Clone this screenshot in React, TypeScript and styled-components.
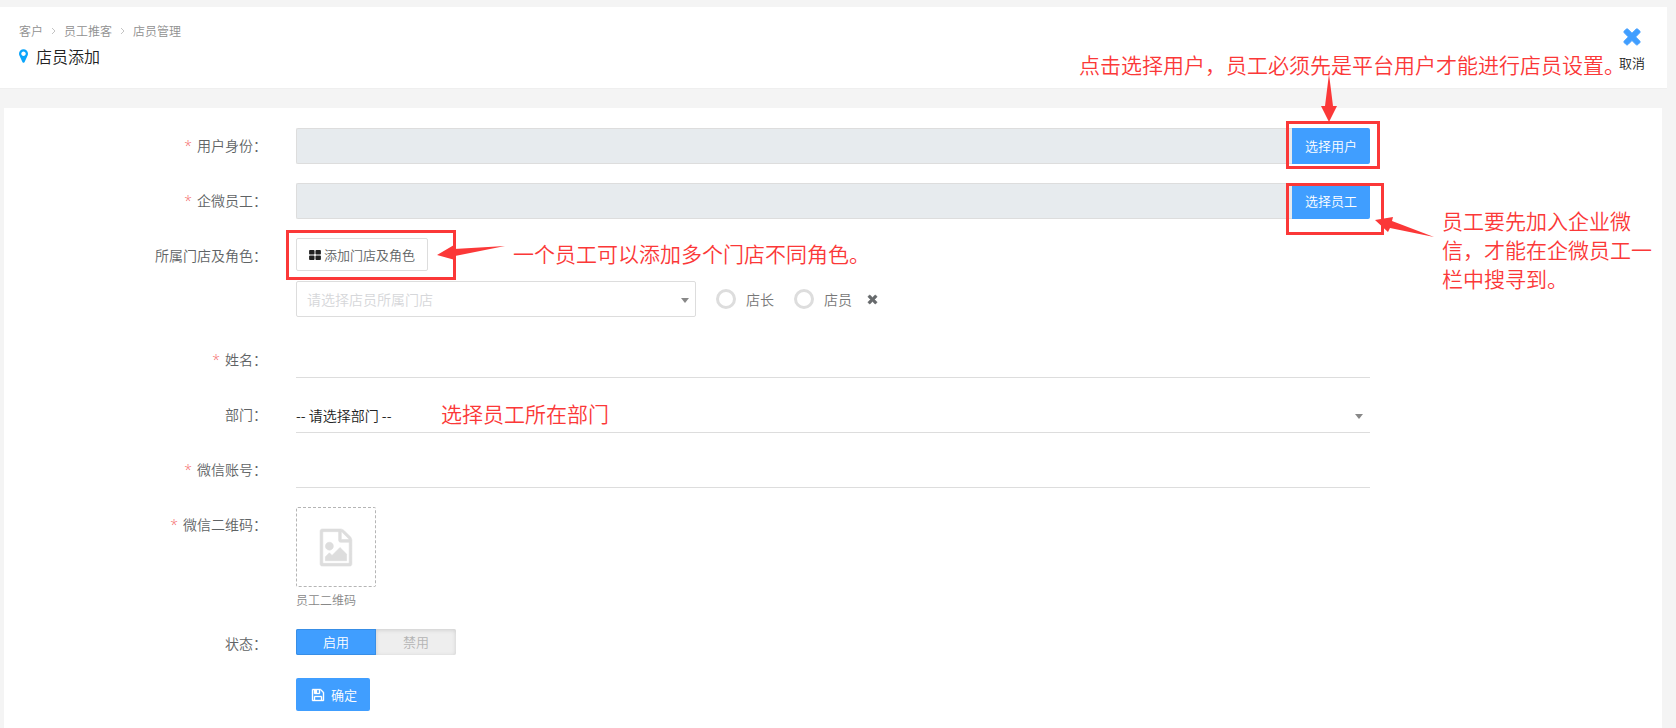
import React from 'react';
import styled, { createGlobalStyle } from 'styled-components';

const BLUE = '#409eff';
const RED = '#fb3838';

const GlobalStyle = createGlobalStyle`
  *, *::before, *::after { box-sizing: border-box; }
  body {
    margin: 0;
    background: #f4f4f4;
    color: #606365;
    font-family: 'Noto Sans CJK SC', sans-serif;
    font-weight: 350;
    font-size: 14px;
    line-height: 20px;
  }
  button, input, select { font: inherit; margin: 0; border-radius: 0; }
  button { cursor: pointer; }
`;

const Page = styled.div`
  display: flex;
  flex-direction: column;
  gap: 20px;
  min-height: 100vh;
  padding-top: 7px;
  overflow-x: hidden;
`;

const Header = styled.header`
  display: flex;
  justify-content: space-between;
  margin-right: 9px;
  padding: 15px 20px 14px 19px;
  background: #fff;
  box-shadow: 0 1px 0 #efefef;
`;

const Crumbs = styled.nav`
  display: flex;
  align-items: center;
  gap: 8px;
  font-size: 12px;
  line-height: 18px;
`;

const Crumb = styled.a`
  color: #909090;
  text-decoration: none;
`;

const Title = styled.h1`
  display: flex;
  align-items: center;
  gap: 8px;
  margin: 4px 0 0;
  color: #222;
  font-size: 16px;
  font-weight: inherit;
  line-height: 24px;
`;

const CancelButton = styled.button`
  display: flex;
  flex-direction: column;
  align-items: center;
  gap: 8px;
  padding: 5px 2px 1px;
  border: 0;
  background: none;
  color: #222;
  font-size: 13px;
  line-height: 20px;
`;

const Panel = styled.form`
  flex: 1;
  display: flex;
  flex-direction: column;
  gap: 19px;
  margin: 0 14px 0 4px;
  padding: 20px 1px 18px;
  background: #fff;
`;

const Row = styled.div`
  display: grid;
  grid-template-columns: minmax(0, 2fr) minmax(0, 8fr) minmax(0, 2fr);
`;

const Label = styled.label`
  padding: 7px 14px 0 0;
  text-align: right;
  line-height: 20px;
`;

const Required = styled.span`
  margin-right: 5px;
  color: #f56c6c;
  font-family: 'Open Sans', sans-serif;
`;

const Field = styled.div<{ $top?: number; $bottom?: number }>`
  grid-column: 2;
  position: relative;
  padding: ${p => p.$top ?? 0}px 15px ${p => p.$bottom ?? 0}px;
`;

const PickerGroup = styled.div`
  display: flex;
`;

const PickerInput = styled.input`
  flex: 1;
  min-width: 0;
  height: 36px;
  padding: 0 10px;
  border: 1px solid #ddd;
  border-right: 0;
  border-radius: 2px 0 0 2px;
  background: #e7ebee;
`;

const Anchor = styled.div`
  position: relative;
  display: flex;
`;

const PickerButton = styled.button`
  width: 78px;
  height: 36px;
  padding: 0;
  border: 0;
  border-radius: 0 2px 2px 0;
  background: ${BLUE};
  color: #fff;
  font-size: 13px;
`;

const AddButton = styled.button`
  display: flex;
  align-items: center;
  gap: 3px;
  height: 33px;
  padding: 0 12px;
  border: 1px solid #ddd;
  border-radius: 2px;
  background: #fff;
  color: #606365;
  font-size: 13px;
`;

const StoreLine = styled.div`
  display: flex;
  align-items: center;
  margin-top: 10px;
`;

const SelectBox = styled.div<{ $width?: string; $inset: number }>`
  position: relative;
  width: ${p => p.$width ?? '100%'};
  &::after {
    content: '';
    position: absolute;
    top: 17px;
    right: ${p => p.$inset}px;
    border: 4px solid transparent;
    border-top: 5px solid #888;
    border-bottom: 0;
    pointer-events: none;
  }
`;

const StoreSelect = styled.select`
  display: block;
  width: 100%;
  height: 36px;
  padding: 0 24px 0 10px;
  border: 1px solid #ddd;
  border-radius: 2px;
  appearance: none;
  background: #fff;
  color: #d6d7da;
`;

const DepartmentSelect = styled.select`
  display: block;
  width: 100%;
  height: 36px;
  padding: 0 24px 0 0;
  border: 0;
  border-bottom: 1px solid #ddd;
  appearance: none;
  background: #fff;
  color: #222;
`;

const LineInput = styled.input`
  display: block;
  width: 100%;
  height: 36px;
  padding: 0;
  border: 0;
  border-bottom: 1px solid #ddd;
  background: #fff;
  outline: none;
`;

const RadioLabel = styled.label`
  display: flex;
  align-items: center;
  gap: 10px;
  margin-left: 20px;
  color: #777;
`;

const Radio = styled.input`
  width: 20px;
  height: 20px;
  border: 3px solid #ddd;
  border-radius: 50%;
  appearance: none;
  background: #fff;
  &:checked { border-color: ${BLUE}; }
`;

const RemoveButton = styled.button`
  display: flex;
  margin-left: 15px;
  padding: 0;
  border: 0;
  background: none;
`;

const Upload = styled.button`
  display: flex;
  align-items: center;
  justify-content: center;
  width: 80px;
  height: 80px;
  padding: 0;
  border: 1px dashed #b5b5b5;
  border-radius: 2px;
  background: #fff;
`;

const Caption = styled.div`
  margin-top: 6px;
  color: #888;
  font-size: 12px;
  line-height: 14px;
`;

const Switch = styled.div`
  display: flex;
`;

const SwitchButton = styled.button<{ $on?: boolean }>`
  width: 80px;
  height: 26px;
  padding: 0;
  border: 0;
  border-radius: ${p => (p.$on ? '2px 0 0 2px' : '0 2px 2px 0')};
  background: ${p => (p.$on ? BLUE : '#eee')};
  box-shadow: ${p => (p.$on ? 'inset 0 0 0 1px #388ee6' : 'inset 0 1px 4px #ccc')};
  color: ${p => (p.$on ? '#fff' : '#b4b4b4')};
  font-size: 13px;
`;

const SubmitButton = styled.button`
  display: flex;
  align-items: center;
  gap: 7px;
  height: 33px;
  padding: 0 13px 0 16px;
  border: 0;
  border-radius: 2px;
  background: ${BLUE};
  color: #fff;
  font-size: 13px;
`;

/* Red callouts floating over the form */
const Frame = styled.div<{ $x: number; $y: number; $w: number; $h: number }>`
  position: absolute;
  left: ${p => p.$x}px;
  top: ${p => p.$y}px;
  width: ${p => p.$w}px;
  height: ${p => p.$h}px;
  border: 3px solid ${RED};
  pointer-events: none;
`;

const Arrow = styled.svg<{ $x: number; $y: number }>`
  position: absolute;
  left: ${p => p.$x}px;
  top: ${p => p.$y}px;
  fill: ${RED};
  pointer-events: none;
`;

const Note = styled.div<{ $x: number; $y: number; $w?: number }>`
  position: absolute;
  left: ${p => p.$x}px;
  top: ${p => p.$y}px;
  width: ${p => (p.$w ? `${p.$w}px` : 'max-content')};
  color: ${RED};
  font-size: 21px;
  line-height: 29px;
  pointer-events: none;
`;

/* Half-width closing punctuation, so a note ends right after its last mark */
const Stop = styled.span`
  font-feature-settings: 'halt';
`;

const PATHS = {
  times:
    'M1490 1322q0 40-28 68l-136 136q-28 28-68 28t-68-28l-294-294-294 294q-28 28-68 28t-68-28l-136-136q-28-28-28-68t28-68l294-294-294-294q-28-28-28-68t28-68l136-136q28-28 68-28t68 28l294 294 294-294q28-28 68-28t68 28l136 136q28 28 28 68t-28 68l-294 294 294 294q28 28 28 68z',
  grid:
    'M832 1024v384q0 52-38 90t-90 38h-512q-52 0-90-38t-38-90v-384q0-52 38-90t90-38h512q52 0 90 38t38 90zm0-768v384q0 52-38 90t-90 38h-512q-52 0-90-38t-38-90v-384q0-52 38-90t90-38h512q52 0 90 38t38 90zm896 768v384q0 52-38 90t-90 38h-512q-52 0-90-38t-38-90v-384q0-52 38-90t90-38h512q52 0 90 38t38 90zm0-768v384q0 52-38 90t-90 38h-512q-52 0-90-38t-38-90v-384q0-52 38-90t90-38h512q52 0 90 38t38 90z',
  save:
    'M512 1536h768v-384h-768v384zm896 0h128v-896q0-14-10-38.5t-20-34.5l-281-281q-10-10-34-20t-39-10v416q0 40-28 68t-68 28h-576q-40 0-68-28t-28-68v-416h-128v1280h128v-416q0-40 28-68t68-28h832q40 0 68 28t28 68v416zm-384-928v-320q0-13-9.5-22.5t-22.5-9.5h-192q-13 0-22.5 9.5t-9.5 22.5v320q0 13 9.5 22.5t22.5 9.5h192q13 0 22.5-9.5t9.5-22.5zm640 32v928q0 40-28 68t-68 28h-1344q-40 0-68-28t-28-68v-1344q0-40 28-68t68-28h928q40 0 88 20t76 48l280 280q28 28 48 76t20 88z',
  image:
    'M1596 380q28 28 48 76t20 88v1152q0 40-28 68t-68 28h-1344q-40 0-68-28t-28-68v-1600q0-40 28-68t68-28h896q40 0 88 20t76 48zm-444-244v376h376q-10-29-22-41l-313-313q-12-12-41-22zm384 1528v-1024h-416q-40 0-68-28t-28-68v-416h-768v1536h1280zm-128-448v320h-1024v-192l192-192 128 128 384-384zm-832-192q-80 0-136-56t-56-136 56-136 136-56 136 56 56 136-56 136-136 56z',
  pin:
    'M1152 640q0-106-75-181t-181-75-181 75-75 181 75 181 181 75 181-75 75-181zm256 0q0 109-33 179l-364 774q-16 33-47.5 52t-67.5 19-67.5-19-46.5-52l-365-774q-33-70-33-179 0-212 150-362t362-150 362 150 150 362z',
};

const VIEWS = {
  times: '302 238 1188 1316',
  grid: '64 128 1664 1408',
  save: '128 128 1536 1536',
  image: '128 0 1536 1792',
  pin: '384 128 1024 1536',
};

type IconProps = { name: keyof typeof PATHS; width: number; height: number; color: string; stroke?: number };

function Icon({ name, width, height, color, stroke = 0 }: IconProps) {
  return (
    <svg
      width={width}
      height={height}
      viewBox={VIEWS[name]}
      fill={color}
      stroke={color}
      strokeWidth={stroke}
      overflow="visible"
      aria-hidden="true"
    >
      <path d={PATHS[name]} />
    </svg>
  );
}

function Chevron() {
  return (
    <svg width="5" height="8" viewBox="0 0 5 8" fill="none" stroke="#c4c4c4" aria-hidden="true">
      <path d="M1 1l3 3-3 3" />
    </svg>
  );
}

type RowLabelProps = { text: string; htmlFor?: string; required?: boolean };

function RowLabel({ text, htmlFor, required }: RowLabelProps) {
  return (
    <Label htmlFor={htmlFor}>
      {required && <Required>*</Required>}
      {text}：
    </Label>
  );
}

export default function App() {
  return (
    <>
      <GlobalStyle />
      <Page>
        <Header>
          <div>
            <Crumbs>
              <Crumb href="#customers">客户</Crumb>
              <Chevron />
              <Crumb href="#promotion">员工推客</Crumb>
              <Chevron />
              <Crumb href="#clerks">店员管理</Crumb>
            </Crumbs>
            <Title>
              <Icon name="pin" width={9} height={14} color="#0ba5fb" />
              店员添加
            </Title>
          </div>
          <CancelButton type="button">
            <Icon name="times" width={18} height={18} color={BLUE} stroke={60} />
            取消
          </CancelButton>
        </Header>

        <Panel onSubmit={e => e.preventDefault()}>
          <Row>
            <RowLabel text="用户身份" htmlFor="user" required />
            <Field>
              <PickerGroup>
                <PickerInput id="user" readOnly />
                <Anchor>
                  <PickerButton type="button">选择用户</PickerButton>
                  <Frame $x={-6} $y={-7} $w={94} $h={48} />
                  <Arrow $x={29} $y={-54} width="16" height="48">
                    <path d="M8 0L12 32H16L8 48L0 32H4Z" />
                  </Arrow>
                  <Note $x={-213} $y={-78}>
                    点击选择用户，员工必须先是平台用户才能进行店员设置<Stop>。</Stop>
                  </Note>
                </Anchor>
              </PickerGroup>
            </Field>
          </Row>

          <Row>
            <RowLabel text="企微员工" htmlFor="staff" required />
            <Field>
              <PickerGroup>
                <PickerInput id="staff" readOnly />
                <Anchor>
                  <PickerButton type="button">选择员工</PickerButton>
                  <Frame $x={-6} $y={0} $w={98} $h={52} />
                  <Arrow $x={83} $y={34} width="59" height="20">
                    <path d="M0 3L18 0L17 4L59 20L15 11L13 15Z" />
                  </Arrow>
                  <Note $x={150} $y={23} $w={212}>员工要先加入企业微信，才能在企微员工一栏中搜寻到。</Note>
                </Anchor>
              </PickerGroup>
            </Field>
          </Row>

          <Row>
            <RowLabel text="所属门店及角色" htmlFor="store" />
            <Field $bottom={6}>
              <AddButton type="button">
                <Icon name="grid" width={12} height={10} color="#222" />
                添加门店及角色
              </AddButton>
              <StoreLine>
                <SelectBox $width="400px" $inset={7}>
                  <StoreSelect id="store">
                    <option>请选择店员所属门店</option>
                  </StoreSelect>
                </SelectBox>
                <RadioLabel>
                  <Radio type="radio" name="role" value="manager" />
                  店长
                </RadioLabel>
                <RadioLabel>
                  <Radio type="radio" name="role" value="clerk" />
                  店员
                </RadioLabel>
                <RemoveButton type="button" aria-label="删除">
                  <Icon name="times" width={11} height={10} color="#676a6c" stroke={60} />
                </RemoveButton>
              </StoreLine>
              <Frame $x={5} $y={-8} $w={170} $h={50} />
              <Arrow $x={156} $y={7} width="68" height="15">
                <path d="M0 10L17 0V4L68 1L18 11V15Z" />
              </Arrow>
              <Note $x={232} $y={1}>一个员工可以添加多个门店不同角色。</Note>
            </Field>
          </Row>

          <Row>
            <RowLabel text="姓名" htmlFor="name" required />
            <Field>
              <LineInput id="name" />
            </Field>
          </Row>

          <Row>
            <RowLabel text="部门" htmlFor="department" />
            <Field>
              <SelectBox $inset={7}>
                <DepartmentSelect id="department">
                  <option>-- 请选择部门 --</option>
                </DepartmentSelect>
              </SelectBox>
              <Note $x={160} $y={2}>选择员工所在部门</Note>
            </Field>
          </Row>

          <Row>
            <RowLabel text="微信账号" htmlFor="wechat" required />
            <Field>
              <LineInput id="wechat" />
            </Field>
          </Row>

          <Row>
            <RowLabel text="微信二维码" htmlFor="qrcode" required />
            <Field>
              <Upload id="qrcode" type="button">
                <Icon name="image" width={32} height={37} color="#ddd" stroke={30} />
              </Upload>
              <Caption>员工二维码</Caption>
            </Field>
          </Row>

          <Row>
            <RowLabel text="状态" htmlFor="enable" />
            <Field $top={3}>
              <Switch>
                <SwitchButton id="enable" type="button" $on>启用</SwitchButton>
                <SwitchButton type="button">禁用</SwitchButton>
              </Switch>
            </Field>
          </Row>

          <Row>
            <Field $top={4}>
              <SubmitButton type="submit">
                <Icon name="save" width={12} height={12} color="#fff" stroke={50} />
                确定
              </SubmitButton>
            </Field>
          </Row>
        </Panel>
      </Page>
    </>
  );
}
